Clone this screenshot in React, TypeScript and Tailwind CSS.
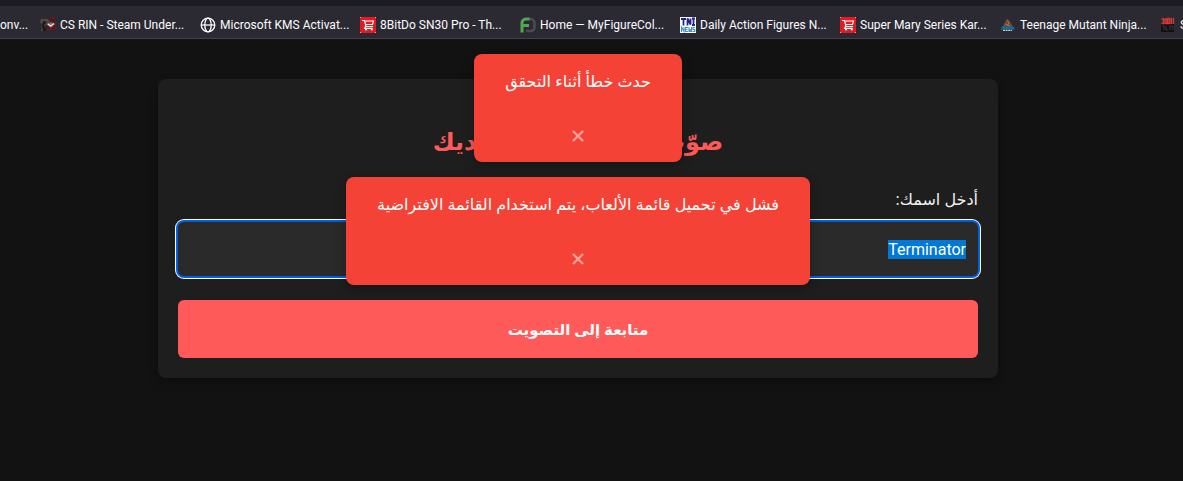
import React from 'react';

const CartIcon = () => (
  <svg viewBox="0 0 16 16" className="w-4 h-4">
    <rect width="16" height="16" fill="#e01b24" />
    <path d="M0 0h1v1H0zM15 0h1v1h-1zM0 15h1v1H0zM15 15h1v1h-1z" fill="#f5a08a" />
    <path
      d="M2 3.500h2.500l1.500 6h7M5 4h8.500l-1 3.500H5.500M5.500 9.500l-.8 1.800h8"
      fill="none"
      stroke="#fff"
      strokeWidth="1.200"
    />
    <circle cx="6" cy="12.600" r="1" fill="#fff" />
    <circle cx="11.800" cy="12.600" r="1" fill="#fff" />
  </svg>
);

const SteamIcon = () => (
  <svg viewBox="0 0 16 16" className="w-4 h-4">
    <path d="M0 1h10l5 3v9H6z" fill="#4a1c20" />
    <path d="M1 2h7l2 3-5 3-2 6H1l1-6-2-3z" fill="#4b4a4d" />
    <path d="M3 4l4 1-3 3 2 6H3L2 8z" fill="#1b1a1e" />
    <path d="M6 7l5-2 4 2-4 4z" fill="#77676a" />
    <path d="M8 7l2.5 2L14 6.5" fill="none" stroke="#e6e0e0" strokeWidth="1.3" />
    <path d="M11 1l3-1v3M7 12.5h8.5V5" fill="none" stroke="#7c1219" strokeWidth="1" />
  </svg>
);

const GlobeIcon = () => (
  <svg viewBox="0 0 16 16" className="w-4 h-4" fill="none" stroke="#fbfbfe" strokeWidth="1.3">
    <circle cx="8" cy="8" r="6.8" />
    <ellipse cx="8" cy="8" rx="3.2" ry="6.8" />
    <path d="M1.2 8h13.6" />
  </svg>
);

const FigureIcon = () => (
  <svg viewBox="0 0 16 16" className="w-4 h-4" fill="none">
    <path d="M9 2h1.5a4 4 0 0 1 4 4v4a4 4 0 0 1-4 4H6" stroke="#4c4c50" strokeWidth="2.6" />
    <path d="M2 15.5V6a4 4 0 0 1 4-4h3.5M2 8.5h7" stroke="#4fa84f" strokeWidth="3" />
  </svg>
);

const NewsIcon = () => (
  <svg viewBox="0 0 16 16" className="w-4 h-4">
    <rect width="16" height="16" fill="#fff" />
    <path d="M1 2h5M3.5 2v6.5M7.5 8.5V1.5l3 6v-6M13.5 1v7.5M12 1.5h3M12 8h3" fill="none" stroke="#23238e" strokeWidth="1.8" />
    <path
      d="M1.5 15v-5l2.5 4.5V10M8 10.5H5.5v4H8M5.5 12.5h2M9 10v4.5h1.2V12v2.5h1.3V10M15 10.5h-2v2h1.8v2h-2.3"
      fill="none"
      stroke="#3f8fc8"
      strokeWidth="1.1"
    />
  </svg>
);

const TurtleIcon = () => (
  <svg viewBox="0 0 16 16" className="w-4 h-4">
    <path d="M7 1.500L11 6l2 4H2.500L5 5z" fill="#6e4634" />
    <path d="M7.500 3l1.500 3-2 3M5 7l5 2" fill="none" stroke="#a9714f" strokeWidth="1" />
    <path d="M2 9.500l3-1 2.500 1.500 3-1.500 3 1 1.500 3H.5z" fill="#176c8c" />
    <path d="M3 13.300h9" stroke="#c5cdd0" strokeWidth="1.200" strokeDasharray="2 .6" />
  </svg>
);

const RobotIcon = () => (
  <svg viewBox="0 0 16 16" className="w-4 h-4">
    <rect x="1" y="7" width="13" height="8" fill="#111014" />
    <path
      d="M1.500 2h2v4.500h-2M5 2h1.800v4.500H5zM8 1.500v5h1.800v-5zM11.500 1v6M13.500 1v6"
      fill="none"
      stroke="#d43a34"
      strokeWidth="1.300"
    />
    <path d="M2 9h2v4M6 9v4h2M10 13V9h3v4" fill="none" stroke="#39383d" strokeWidth="1" />
  </svg>
);

const bookmarks = [
  { title: 'CS RIN - Steam Under...', Icon: SteamIcon },
  { title: 'Microsoft KMS Activat...', Icon: GlobeIcon },
  { title: '8BitDo SN30 Pro - Th...', Icon: CartIcon },
  { title: 'Home — MyFigureCol...', Icon: FigureIcon },
  { title: 'Daily Action Figures N...', Icon: NewsIcon },
  { title: 'Super Mary Series Kar...', Icon: CartIcon },
  { title: 'Teenage Mutant Ninja...', Icon: TurtleIcon },
  { title: 'S', Icon: RobotIcon },
];

const BookmarksBar = () => (
  <nav
    dir="ltr"
    className="flex items-center h-[39px] pt-[10px] pb-1 overflow-hidden border-t-[6px] border-b border-t-[#1c1b22] border-b-[#42414d] bg-[#2b2a33] text-[#fbfbfe] text-xs font-[Roboto,sans-serif]"
  >
    <a href="#" className="w-10 shrink-0 whitespace-nowrap">
      onv...
    </a>
    {bookmarks.map(({ title, Icon }) => (
      <a key={title} href="#" className="flex items-center gap-1 w-40 shrink-0 whitespace-nowrap">
        <Icon />
        <span>{title}</span>
      </a>
    ))}
  </nav>
);

const Toast = ({ message, onClose }: { message: string; onClose: () => void }) => (
  <div
    role="alert"
    className="flex flex-col items-center max-w-full h-[108px] px-[31px] pt-[13px] rounded-lg bg-[#f44336] text-white shadow-[0_4px_12px_rgba(0,0,0,0.3)]"
  >
    <p className="leading-7 whitespace-nowrap">{message}</p>
    <button type="button" aria-label="إغلاق" onClick={onClose} className="mt-[26px] px-3 text-[#f9a19a]">
      <svg viewBox="0 0 12 12" className="w-3 h-[30px]" stroke="currentColor" strokeWidth="2.4">
        <path d="M1 1l10 10M11 1L1 11" />
      </svg>
    </button>
  </div>
);

export default function App() {
  const [name, setName] = React.useState('Terminator');
  const [toasts, setToasts] = React.useState([
    'حدث خطأ أثناء التحقق',
    'فشل في تحميل قائمة الألعاب، يتم استخدام القائمة الافتراضية',
  ]);
  const inputRef = React.useRef<HTMLInputElement>(null);

  React.useEffect(() => {
    inputRef.current?.focus();
    inputRef.current?.select();
  }, []);

  return (
    <div
      dir="rtl"
      className="flex flex-col min-h-screen bg-[#121212] text-white text-base font-['Open_Sans','DejaVu_Sans',sans-serif]"
    >
      <BookmarksBar />
      <main className="relative grow pt-10 pl-5 pr-[47px] pb-10" dir="ltr">
        <div dir="rtl" className="max-w-[840px] mx-auto p-5 rounded-lg bg-[#1e1e1e] shadow-[0_4px_10px_rgba(0,0,0,0.3)]">
          <h1 className="mt-5 text-center text-2xl leading-[44px] font-bold text-[#ff5a5a]">
            صوّت للعبة المفضلة لديك
          </h1>
          <form onSubmit={(e) => e.preventDefault()} className="mt-[22px]">
            <label htmlFor="name" className="block text-[#f0f0f0] leading-7">
              أدخل اسمك:
            </label>
            <input
              id="name"
              ref={inputRef}
              type="text"
              value={name}
              onChange={(e) => setName(e.target.value)}
              className="block w-full h-[54px] mt-[9px] px-3 rounded-md bg-[#2a2a2a] leading-[30px] font-[Roboto,'DejaVu_Sans',sans-serif] outline-none selection:bg-[#0078d7] selection:text-white focus:shadow-[0_0_0_2px_#0060df,0_0_0_3px_#fff]"
            />
            <button type="submit" className="block w-full h-[58px] mt-6 rounded-md bg-[#ff5a5a] text-[15px] font-bold">
              متابعة إلى التصويت
            </button>
          </form>
        </div>

        {/* Notifications */}
        <div dir="rtl" className="absolute inset-x-0 top-[15px] pr-[27px] flex flex-col items-center gap-[15px]">
          {toasts.map((message) => (
            <Toast key={message} message={message} onClose={() => setToasts(toasts.filter((t) => t !== message))} />
          ))}
        </div>
      </main>
    </div>
  );
}
